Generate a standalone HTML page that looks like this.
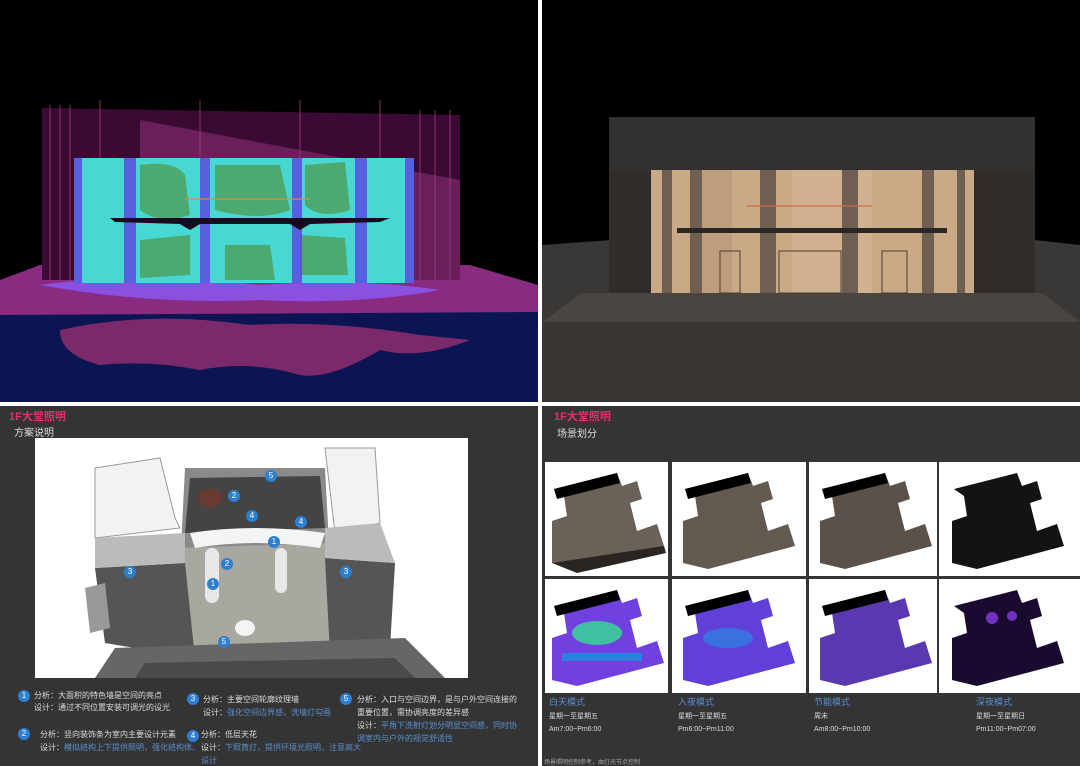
<!DOCTYPE html>
<html><head><meta charset="utf-8"><style>
*{margin:0;padding:0;box-sizing:border-box}
body{width:1080px;height:766px;background:#fff;position:relative;overflow:hidden;font-family:"Liberation Sans","Noto Sans CJK SC",sans-serif}
.p{position:absolute;overflow:hidden}
.t{position:absolute;font-size:8px;color:#ddd;white-space:nowrap;line-height:11px}
.b{color:#5a8fd0}
.n{position:absolute;width:12px;height:12px;border-radius:50%;background:#2f7fd0;color:#fff;font-size:8px;text-align:center;line-height:12px}
</style></head><body>

<!-- top-left false colour -->
<div class="p" style="left:0;top:0;width:538px;height:402px;background:#000">
<svg width="538" height="402">
<rect x="0" y="310" width="538" height="92" fill="#0c1554"/>
<path d="M60 330 Q150 310 250 325 Q330 320 420 335 L470 340 Q420 360 380 350 Q330 380 300 375 Q250 360 200 370 Q150 360 100 365 Q60 355 60 330Z" fill="#7a2a6a"/>
<path d="M0 280 L40 265 L470 265 L538 285 L538 312 L0 315Z" fill="#8a2a80"/>
<path d="M40 285 Q150 270 260 285 Q360 278 440 290 Q360 305 260 300 Q150 305 40 285Z" fill="#8a50e0"/>
<path d="M42 108 L460 115 L460 280 L42 280Z" fill="#3a0a34"/>
<path d="M140 120 L460 180 L460 280 L140 280Z" fill="#6a1f5a"/>
<g stroke="#a0407a" stroke-width="1" opacity=".8">
<line x1="50" y1="105" x2="50" y2="280"/><line x1="60" y1="105" x2="60" y2="280"/><line x1="70" y1="105" x2="70" y2="280"/><line x1="420" y1="110" x2="420" y2="280"/><line x1="435" y1="110" x2="435" y2="280"/><line x1="450" y1="110" x2="450" y2="280"/><line x1="100" y1="100" x2="100" y2="160"/><line x1="200" y1="100" x2="200" y2="160"/><line x1="300" y1="100" x2="300" y2="160"/><line x1="380" y1="100" x2="380" y2="160"/></g>
<rect x="74" y="158" width="340" height="125" fill="#48d8d4"/>
<g fill="#4caa70">
<path d="M140 165 Q175 160 185 175 L190 215 Q160 225 140 210Z"/>
<path d="M215 165 L280 165 L290 210 Q260 222 215 210Z"/>
<path d="M305 165 L345 162 L350 210 Q320 220 305 205Z"/>
<path d="M140 240 L190 235 L190 275 L140 278Z"/><path d="M300 235 L345 238 L348 275 L300 275Z"/>
<path d="M225 245 L270 245 L275 280 L225 280Z"/></g>
<g fill="#5a4ce0" opacity=".85">
<rect x="74" y="158" width="8" height="125"/><rect x="124" y="158" width="12" height="125"/><rect x="200" y="158" width="10" height="125"/><rect x="292" y="158" width="10" height="125"/><rect x="355" y="158" width="12" height="125"/><rect x="405" y="158" width="9" height="125"/></g>
<path d="M110 218 L390 218 L380 222 L310 224 L300 230 L290 224 L200 224 L190 230 L180 224 L115 222Z" fill="#1a0a20"/>
<line x1="185" y1="199" x2="310" y2="199" stroke="#e08a40" stroke-width="1.2"/>
</svg></div>

<!-- top-right render -->
<div class="p" style="left:542px;top:0;width:538px;height:402px;background:#000">
<svg width="538" height="402">
<path d="M0 245 L70 240 L70 320 L0 322Z" fill="#3a3836"/>
<path d="M493 240 L538 245 L538 322 L493 320Z" fill="#3a3836"/>
<rect x="0" y="322" width="538" height="80" fill="#393533"/>
<path d="M0 322 L40 293 L500 293 L538 322Z" fill="#4a4540"/>
<rect x="67" y="117" width="426" height="176" fill="#2f2c2a"/>
<rect x="67" y="117" width="426" height="55" fill="#333030"/>
<rect x="109" y="170" width="323" height="123" fill="#c9a986"/>
<rect x="150" y="170" width="40" height="123" fill="#b89878" opacity=".7"/>
<rect x="250" y="170" width="80" height="123" fill="#d6b898" opacity=".6"/>
<g fill="#6e5f50"><rect x="120" y="170" width="10" height="123"/><rect x="148" y="170" width="12" height="123"/><rect x="218" y="170" width="16" height="123"/><rect x="300" y="170" width="16" height="123"/><rect x="380" y="170" width="12" height="123"/><rect x="415" y="170" width="8" height="123"/></g>
<rect x="135" y="228" width="270" height="5" fill="#2a2624"/>
<line x1="205" y1="206" x2="330" y2="206" stroke="#d07040" stroke-width="1.2"/>
<g fill="none" stroke="#4a3a30"><rect x="178" y="251" width="20" height="42"/><rect x="237" y="251" width="62" height="42"/><rect x="340" y="251" width="25" height="42"/></g>
</svg></div>

<!-- bottom-left -->
<div class="p" style="left:0;top:406px;width:538px;height:360px;background:#343434">
<div class="t" style="left:9px;top:6px;font-size:11px;color:#e0306a;font-weight:bold">1F大堂照明</div>
<div class="t" style="left:14px;top:22px;font-size:10px;color:#ddd">方案说明</div>
<div style="position:absolute;left:35px;top:32px;width:433px;height:240px;background:#fff">
<svg width="433" height="240">
<path d="M60 30 L125 20 L140 80 L145 90 L60 100Z" fill="#f2f2f2" stroke="#999"/>
<path d="M290 10 L340 10 L345 85 L300 95Z" fill="#f2f2f2" stroke="#999"/>
<path d="M150 30 L290 30 L300 220 L140 225Z" fill="#8a8a8a"/>
<path d="M155 40 L285 38 L290 90 L150 95Z" fill="#444"/>
<path d="M145 110 L290 105 L295 220 L150 225Z" fill="#a8a8a0"/>
<path d="M60 130 L150 125 L160 220 L70 205Z" fill="#555"/>
<path d="M290 120 L360 125 L355 210 L295 215Z" fill="#555"/>
<path d="M60 130 L150 125 L150 95 L60 100Z" fill="#bbb"/>
<path d="M290 120 L360 125 L345 85 L290 90Z" fill="#bbb"/>
<path d="M50 150 L70 145 L75 190 L55 195Z" fill="#999"/>
<path d="M80 210 L370 200 L410 240 L60 240Z" fill="#666"/>
<path d="M110 225 L360 220 L380 240 L100 240Z" fill="#4a4a4a"/>
<path d="M155 95 Q220 85 290 95 L285 110 Q220 100 160 110Z" fill="#f4f4f4"/>
<rect x="170" y="110" width="14" height="55" rx="7" fill="#e8e8e8"/>
<rect x="240" y="110" width="12" height="45" rx="6" fill="#e8e8e8"/>
<ellipse cx="210" cy="190" rx="10" ry="8" fill="#f4f4f4"/>
<ellipse cx="175" cy="60" rx="12" ry="9" fill="#6a3a30"/>
</svg>
<div class="n" style="left:230px;top:32px">5</div>
<div class="n" style="left:193px;top:52px">2</div>
<div class="n" style="left:211px;top:72px">4</div>
<div class="n" style="left:260px;top:78px">4</div>
<div class="n" style="left:233px;top:98px">1</div>
<div class="n" style="left:186px;top:120px">2</div>
<div class="n" style="left:172px;top:140px">1</div>
<div class="n" style="left:89px;top:128px">3</div>
<div class="n" style="left:305px;top:128px">3</div>
<div class="n" style="left:183px;top:198px">5</div>
</div>
<div class="n" style="left:18px;top:284px">1</div>
<div class="t" style="left:34px;top:284px">分析：大面积的特色墙是空间的亮点</div>
<div class="t" style="left:34px;top:296px">设计：通过不同位置安装可调光的设光</div>
<div class="n" style="left:18px;top:322px">2</div>
<div class="t" style="left:40px;top:323px">分析：竖向装饰条为室内主要设计元素</div>
<div class="t" style="left:40px;top:336px">设计：<span class="b">模拟结构上下提供照明，强化结构体、</span></div>
<div class="n" style="left:187px;top:287px">3</div>
<div class="t" style="left:203px;top:288px">分析：主要空间轮廓纹理墙</div>
<div class="t" style="left:203px;top:301px">设计：<span class="b">强化空间边界感，洗墙灯勾画</span></div>
<div class="n" style="left:187px;top:324px">4</div>
<div class="t" style="left:201px;top:323px">分析：低层天花</div>
<div class="t" style="left:201px;top:336px">设计：<span class="b">下照筒灯，提供环境光照明，注意高大</span></div>
<div class="t" style="left:201px;top:349px"><span class="b">设计</span></div>
<div class="n" style="left:340px;top:287px">5</div>
<div class="t" style="left:357px;top:288px">分析：入口与空间边界，是与户外空间连接的</div>
<div class="t" style="left:357px;top:301px">重要位置，需协调亮度的差异感</div>
<div class="t" style="left:357px;top:314px">设计：<span class="b">平角下洗射灯划分明显空间感，同时协</span></div>
<div class="t" style="left:357px;top:327px"><span class="b">调室内与户外的视觉舒适性</span></div>
</div>

<!-- bottom-right -->
<div class="p" style="left:542px;top:406px;width:538px;height:360px;background:#343434">
<div class="t" style="left:12px;top:6px;font-size:11px;color:#e0306a;font-weight:bold">1F大堂照明</div>
<div class="t" style="left:15px;top:23px;font-size:10px;color:#ddd">场景划分</div>
<svg style="position:absolute;left:0;top:55px" width="538" height="233">
<g fill="#fff"><rect x="3" y="1" width="123" height="114"/><rect x="130" y="1" width="134" height="114"/><rect x="267" y="1" width="128" height="114"/><rect x="397" y="1" width="141" height="114"/>
<rect x="3" y="118" width="123" height="114"/><rect x="130" y="118" width="134" height="114"/><rect x="267" y="118" width="128" height="114"/><rect x="397" y="118" width="141" height="114"/></g>
<g transform="translate(0,0)"><path d="M12 28 L75 12 L80 25 L95 20 L100 38 L88 42 L95 70 L115 63 L122 85 L35 108 L10 102 L10 60 L25 55 L22 35Z" fill="#6a6258"/><path d="M12 28 L75 12 L78 22 L15 38Z" fill="#000"/><path d="M10 102 L122 85 L124 92 L35 112Z" fill="#2a2520"/></g>
<g transform="translate(131,0)"><path d="M12 28 L75 12 L80 25 L95 20 L100 38 L88 42 L95 70 L115 63 L122 85 L35 108 L10 102 L10 60 L25 55 L22 35Z" fill="#625a50"/><path d="M12 28 L75 12 L78 22 L15 38Z" fill="#000"/></g>
<g transform="translate(268,0)"><path d="M12 28 L75 12 L80 25 L95 20 L100 38 L88 42 L95 70 L115 63 L122 85 L35 108 L10 102 L10 60 L25 55 L22 35Z" fill="#5a524a"/><path d="M12 28 L75 12 L78 22 L15 38Z" fill="#000"/></g>
<g transform="translate(400,0)"><path d="M12 28 L75 12 L80 25 L95 20 L100 38 L88 42 L95 70 L115 63 L122 85 L35 108 L10 102 L10 60 L25 55 L22 35Z" fill="#151312"/></g>
<g transform="translate(0,117)"><path d="M12 28 L75 12 L80 25 L95 20 L100 38 L88 42 L95 70 L115 63 L122 85 L35 108 L10 102 L10 60 L25 55 L22 35Z" fill="#7040e0"/><ellipse cx="55" cy="55" rx="25" ry="12" fill="#40c0a0"/><rect x="20" y="75" width="80" height="8" fill="#3080e0"/><path d="M12 28 L75 12 L78 22 L15 38Z" fill="#000"/></g>
<g transform="translate(131,117)"><path d="M12 28 L75 12 L80 25 L95 20 L100 38 L88 42 L95 70 L115 63 L122 85 L35 108 L10 102 L10 60 L25 55 L22 35Z" fill="#6040d8"/><ellipse cx="55" cy="60" rx="25" ry="10" fill="#3a70e0"/><path d="M12 28 L75 12 L78 22 L15 38Z" fill="#000"/></g>
<g transform="translate(268,117)"><path d="M12 28 L75 12 L80 25 L95 20 L100 38 L88 42 L95 70 L115 63 L122 85 L35 108 L10 102 L10 60 L25 55 L22 35Z" fill="#5a38b0"/><path d="M12 28 L75 12 L78 22 L15 38Z" fill="#000"/></g>
<g transform="translate(400,117)"><path d="M12 28 L75 12 L80 25 L95 20 L100 38 L88 42 L95 70 L115 63 L122 85 L35 108 L10 102 L10 60 L25 55 L22 35Z" fill="#1a0a30"/><circle cx="50" cy="40" r="6" fill="#7030c0"/><circle cx="70" cy="38" r="5" fill="#7030c0"/></g>
</svg>
<div class="t b" style="left:7px;top:291px;font-size:9px">白天模式</div>
<div class="t" style="left:7px;top:305px;font-size:7px">星期一至星期五</div>
<div class="t" style="left:7px;top:318px;font-size:7px">Am7:00~Pm6:00</div>
<div class="t b" style="left:136px;top:291px;font-size:9px">入夜模式</div>
<div class="t" style="left:136px;top:305px;font-size:7px">星期一至星期五</div>
<div class="t" style="left:136px;top:318px;font-size:7px">Pm6:00~Pm11:00</div>
<div class="t b" style="left:272px;top:291px;font-size:9px">节能模式</div>
<div class="t" style="left:272px;top:305px;font-size:7px">周末</div>
<div class="t" style="left:272px;top:318px;font-size:7px">Am8:00~Pm10:00</div>
<div class="t b" style="left:434px;top:291px;font-size:9px">深夜模式</div>
<div class="t" style="left:434px;top:305px;font-size:7px">星期一至星期日</div>
<div class="t" style="left:434px;top:318px;font-size:7px">Pm11:00~Pm07:00</div>
<div class="t" style="left:2px;top:352px;font-size:6px;color:#aaa">场景照明控制参考，由灯光节点控制</div>
</div>
</body></html>
